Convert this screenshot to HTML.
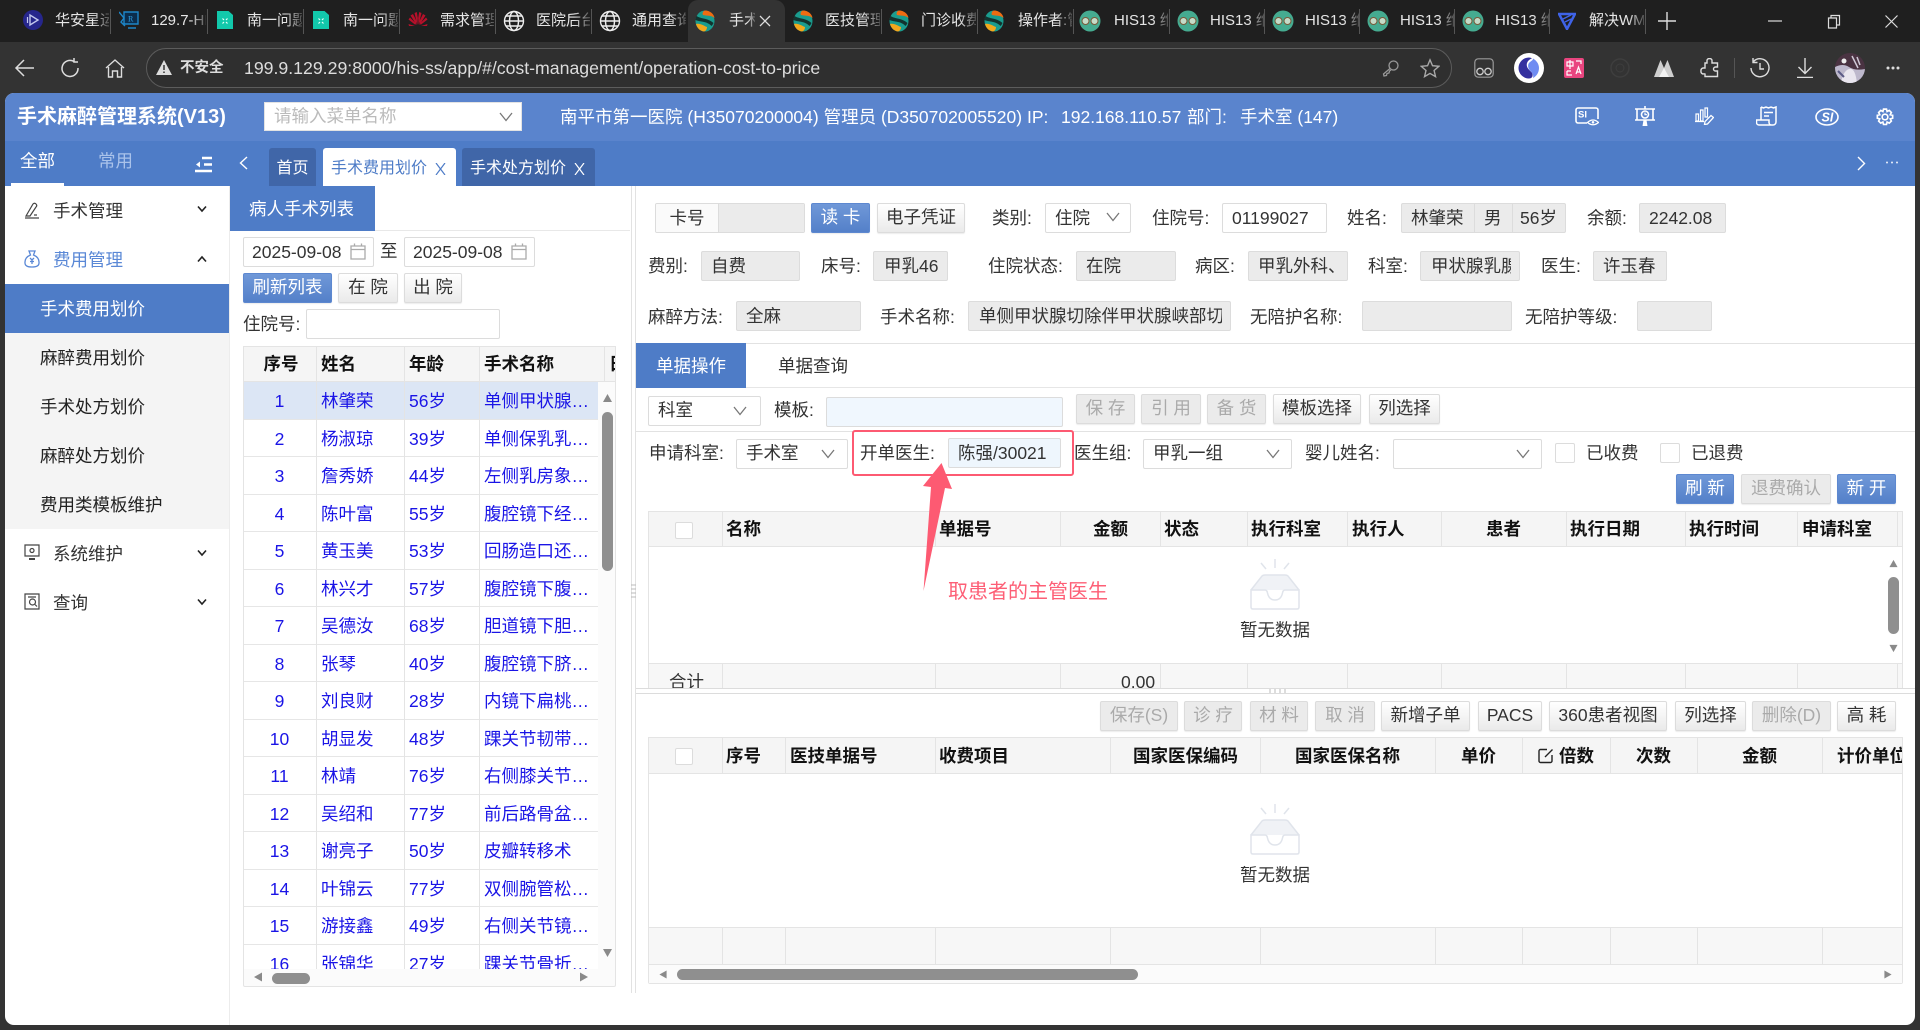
<!DOCTYPE html>
<html lang="zh-CN"><head><meta charset="utf-8"><title>手术麻醉管理系统</title>
<style>
html,body{margin:0;padding:0;width:1920px;height:1030px;overflow:hidden;background:#333}
body{position:relative;font-family:"Liberation Sans","Noto Sans CJK SC",sans-serif;font-size:17.5px;color:#333}
div,span,svg{position:absolute;box-sizing:border-box}
.t{white-space:nowrap;line-height:30px;height:30px}
.f{border:1px solid #dcdcdc;border-radius:2px;background:#fff;height:30px;line-height:28px;white-space:nowrap;overflow:hidden}
.g{background:#ebebeb}
.b{border:1px solid #dcdcdc;border-radius:2px;height:30px;line-height:27px;text-align:center;white-space:nowrap;background:linear-gradient(#fff,#eaeaea);box-shadow:0 1px 1px rgba(0,0,0,.08)}
.d{background:#ebebeb;color:#aaa}
.p{background:linear-gradient(#7098d8,#5480c9);border-color:#5d88d0;color:#fff}
.tab{top:9px;height:24px;line-height:24px;font-size:15px;color:#e6e6e6;white-space:nowrap;overflow:hidden;-webkit-mask-image:linear-gradient(90deg,#000 70%,rgba(0,0,0,.25))}
.sep{top:9px;width:1px;height:25px;background:#555}
.m{left:53px;font-size:17.5px;color:#333}
.s{left:40px;font-size:17.5px;color:#222}
.th{font-weight:700;color:#111;white-space:nowrap;line-height:30px;height:30px}
.vl{width:1px;background:#e4e4e4}
.r{left:0;width:355px;height:37.5px;border-bottom:1.5px solid #e6e6e6;color:#1a14e6;line-height:38px}
.r span{white-space:nowrap}
.r span:nth-child(1){left:0;width:73px;text-align:center}
.r span:nth-child(2){left:78px}
.r span:nth-child(3){left:166px}
.r span:nth-child(4){left:241px}
.hi{stroke:#fff;fill:none;stroke-width:1.6}
</style></head><body>
<svg width="0" height="0" style="left:0;top:0"><defs>
<symbol id="orb" viewBox="0 0 20 22"><ellipse cx="10" cy="11" rx="9.5" ry="10.5" fill="#1a9c8e"/><path d="M10 .5C15 .5 19 4 19.5 8 16 5 12 6 8 5 7 3 8 1 10 .5Z" fill="#ef6c12"/><path d="M1 14c4-1 8 2 11 3 0 2-1 4-3 4.500C5 21 2 18 1 14Z" fill="#f2a81d"/><path d="M1.500 6C6 9 13 8 18.500 13c-.5 1-1 2-2 3C12 11 5 12 .5 10c0-1.500.5-3 1-4Z" fill="#12332f"/></symbol>
<symbol id="glass" viewBox="0 0 22 22"><circle cx="11" cy="11" r="10.500" fill="#45ab90"/><circle cx="6.500" cy="11" r="3.500" fill="#c5dcc9" stroke="#7a5a3a"/><circle cx="15.500" cy="11" r="3.500" fill="#c5dcc9" stroke="#7a5a3a"/></symbol>
<symbol id="globe" viewBox="0 0 22 22"><g fill="none" stroke="#eee" stroke-width="1.400"><circle cx="11" cy="11" r="9.500"/><ellipse cx="11" cy="11" rx="4.500" ry="9.500"/><path d="M1.500 11h19M3 6h16M3 16h16"/></g></symbol>
<symbol id="doc" viewBox="0 0 16 18"><path d="M0 0h11.500l4.500 4v14H0Z" fill="#12c8ab"/><path d="M5.500 7.500l1.500 1.500M10.500 7.500 9 9M5.500 12.500 7 11M10.500 12.500 9 11" stroke="#e8fffa" stroke-width="1.200"/></symbol>
<symbol id="chev" viewBox="0 0 14 10"><path d="M1 1l6 7.500L13 1" fill="none" stroke="#777" stroke-width="1.300"/></symbol>
<symbol id="cal" viewBox="0 0 16 16"><path d="M1 2.500h14v13H1ZM1 6h14M4.500 0v3M11.500 0v3" fill="none" stroke="#aaa" stroke-width="1.300"/></symbol>
<symbol id="sc" viewBox="0 0 10 10"><path d="M5 1l4.500 8H.5Z" fill="#8a8a8a"/></symbol>
<symbol id="empty" viewBox="0 0 50 51"><g fill="none" stroke="#e0e4eb" stroke-width="1.500"><path d="M25 0v9M11 4l5 6M39 4l-5 6"/><path d="M1 31 12 17q1-1 3-1h20q2 0 3 1l11 14" fill="#f0f2f6"/><path d="M1 31h14q2 0 2.500 3 1.500 7 7.500 7t7.500-7q.5-3 2.500-3h14v17q0 2-2 2H3q-2 0-2-2Z" fill="#fff"/></g></symbol>
</defs></svg>

<!-- browser tab strip -->
<div style="left:0;top:0;width:1920px;height:42px;background:#1f1f1f"></div>
<div style="left:688px;top:0;width:97px;height:42px;background:#333;border-radius:10px 10px 0 0"></div>
<div class="sep" style="left:110px"></div><div class="sep" style="left:207px"></div><div class="sep" style="left:303px"></div><div class="sep" style="left:399px"></div><div class="sep" style="left:495px"></div><div class="sep" style="left:591px"></div><div class="sep" style="left:881px"></div><div class="sep" style="left:977px"></div><div class="sep" style="left:1073px"></div><div class="sep" style="left:1169px"></div><div class="sep" style="left:1264px"></div><div class="sep" style="left:1359px"></div><div class="sep" style="left:1454px"></div><div class="sep" style="left:1549px"></div><div class="sep" style="left:1645px"></div>
<svg style="left:23px;top:10px" width="20" height="20" viewBox="0 0 20 20"><circle cx="10" cy="10" r="10" fill="#26268c"/><path d="M7 5v10l8-5Z" fill="none" stroke="#c3c8ee" stroke-width="1.400"/><path d="M4.500 7v6" stroke="#c3c8ee" stroke-width="1.200"/></svg>
<svg style="left:119px;top:11px" width="20" height="18" viewBox="0 0 20 18"><path d="M5 1h14v12H5Z" fill="#0b2d4d" stroke="#1d86c9" stroke-width="1.400"/><path d="M0 1l5 6-3 4 4 4M9 17h8" fill="none" stroke="#1d86c9" stroke-width="1.400"/><text x="9" y="10.500" font-size="8" fill="#2e9fe0" font-family="Liberation Serif">R</text></svg>
<svg style="left:217px;top:11px" width="16" height="18"><use href="#doc"/></svg>
<svg style="left:313px;top:11px" width="16" height="18"><use href="#doc"/></svg>
<svg style="left:408px;top:12px" width="20" height="14" viewBox="0 0 20 14"><g fill="#b8102a"><path d="M9.400 13 6.500 1 8.800 0l1 6ZM10.600 13l2.900-12L11.200 0l-1 6ZM8.500 13 2.500 3.500 5 2 8.500 9ZM11.500 13l6-9.500L15 2l-3.500 7ZM7.500 13 .5 7.500 2 5.500 7.500 11ZM12.500 13l7-5.500L18 5.500 12.500 11Z"/><path d="M7 14H1l-.5-2ZM13 14h6l.5-2Z"/></g></svg>
<svg style="left:503px;top:10px" width="22" height="22"><use href="#globe"/></svg>
<svg style="left:599px;top:10px" width="22" height="22"><use href="#globe"/></svg>
<svg style="left:695px;top:10px" width="20" height="22"><use href="#orb"/></svg>
<svg style="left:793px;top:10px" width="20" height="22"><use href="#orb"/></svg>
<svg style="left:889px;top:10px" width="20" height="22"><use href="#orb"/></svg>
<svg style="left:984px;top:10px" width="20" height="22"><use href="#orb"/></svg>
<svg style="left:1079px;top:10px" width="22" height="22"><use href="#glass"/></svg>
<svg style="left:1177px;top:10px" width="22" height="22"><use href="#glass"/></svg>
<svg style="left:1272px;top:10px" width="22" height="22"><use href="#glass"/></svg>
<svg style="left:1367px;top:10px" width="22" height="22"><use href="#glass"/></svg>
<svg style="left:1462px;top:10px" width="22" height="22"><use href="#glass"/></svg>
<svg style="left:1558px;top:12px" width="18" height="18" viewBox="0 0 18 18"><path d="M1 2h16l-8 15Z" fill="none" stroke="#3f63e8" stroke-width="2.500"/><path d="M5 7l8-4M7 10l6-3" stroke="#3f63e8" stroke-width="1.500"/></svg>
<div class="tab" style="left:55px;width:54px">华安星运维</div>
<div class="tab" style="left:151px;width:55px">129.7-HIS</div>
<div class="tab" style="left:247px;width:55px">南一问题单</div>
<div class="tab" style="left:343px;width:55px">南一问题单</div>
<div class="tab" style="left:440px;width:54px">需求管理</div>
<div class="tab" style="left:536px;width:54px">医院后台</div>
<div class="tab" style="left:632px;width:54px">通用查询</div>
<div class="tab" style="left:729px;width:26px">手术</div>
<svg style="left:759px;top:15px" width="12" height="12"><path d="M1 1l10 10M11 1 1 11" stroke="#ddd" stroke-width="1.300"/></svg>
<div class="tab" style="left:825px;width:55px">医技管理</div>
<div class="tab" style="left:921px;width:55px">门诊收费</div>
<div class="tab" style="left:1018px;width:54px">操作者:管</div>
<div class="tab" style="left:1114px;width:54px">HIS13 维</div>
<div class="tab" style="left:1210px;width:54px">HIS13 维</div>
<div class="tab" style="left:1305px;width:54px">HIS13 维</div>
<div class="tab" style="left:1400px;width:54px">HIS13 维</div>
<div class="tab" style="left:1495px;width:54px">HIS13 维</div>
<div class="tab" style="left:1589px;width:55px">解决WM</div>
<svg style="left:1658px;top:12px" width="18" height="18"><path d="M9 0v18M0 9h18" stroke="#ddd" stroke-width="1.400"/></svg>
<svg style="left:1768px;top:20px" width="14" height="2"><path d="M0 1h14" stroke="#ddd" stroke-width="1.200"/></svg>
<svg style="left:1827px;top:14px" width="14" height="15"><path d="M1.500 4h8v10h-8ZM4 4V1.500h8.500V11H9.500" fill="none" stroke="#ddd" stroke-width="1.200"/></svg>
<svg style="left:1885px;top:15px" width="13" height="13"><path d="M.5.500l12 12M12.500.500l-12 12" stroke="#ddd" stroke-width="1.200"/></svg>

<!-- toolbar -->
<div style="left:0;top:42px;width:1920px;height:51px;background:#333"></div>
<svg style="left:14px;top:59px" width="21" height="18"><path d="M20 9H2M10 1 2 9l8 8" fill="none" stroke="#ddd" stroke-width="1.500"/></svg>
<svg style="left:60px;top:58px" width="20" height="20" viewBox="0 0 20 20"><path d="M14 3.500A8 8 0 1 0 18 10M14 0v4h4" fill="none" stroke="#ddd" stroke-width="1.500"/></svg>
<svg style="left:105px;top:59px" width="20" height="19"><path d="M1 9l9-8 9 8M3.500 8v10h4v-6h5v6h4V8" fill="none" stroke="#ddd" stroke-width="1.400"/></svg>
<div style="left:146px;top:48px;width:1306px;height:40px;border:1px solid #5c5c5c;border-radius:20px;background:#2f2f2f"></div>
<svg style="left:156px;top:60px" width="16" height="15"><path d="M8 0l8 15H0Z" fill="#ddd"/><path d="M8 5v5M8 11.500v1.500" stroke="#333" stroke-width="1.500"/></svg>
<div class="t" style="left:180px;top:53px;font-size:14.5px;font-weight:700;color:#ddd">不安全</div>
<div class="t" style="left:244px;top:53px;font-size:17.700px;color:#ddd">199.9.129.29:8000/his-ss/app/#/cost-management/operation-cost-to-price</div>
<svg style="left:1382px;top:60px" width="17" height="17" viewBox="0 0 17 17"><circle cx="11.500" cy="5.500" r="4.500" fill="none" stroke="#999" stroke-width="1.300"/><path d="M8 8.500 1.500 14l.5 2 2.500-.5.500-2 2-.5.500-2 1.500-1" fill="none" stroke="#999" stroke-width="1.300"/></svg>
<svg style="left:1420px;top:58px" width="20" height="20" viewBox="0 0 22 21"><path d="M11 1.500l2.800 6.500 7 .6-5.300 4.600 1.600 6.800-6.100-3.600L5 20l1.600-6.800L1.300 8.600l7-.6Z" fill="none" stroke="#aaa" stroke-width="1.500"/></svg>
<svg style="left:1474px;top:58px" width="20" height="20" viewBox="0 0 20 20"><rect x=".8" y=".8" width="18.400" height="18.400" rx="3.500" fill="none" stroke="#999" stroke-width="1.200"/><circle cx="6" cy="13.500" r="3.200" fill="none" stroke="#ccc" stroke-width="1.300"/><circle cx="14" cy="13.500" r="3.200" fill="none" stroke="#ccc" stroke-width="1.300"/></svg>
<svg style="left:1514px;top:53px" width="30" height="30" viewBox="0 0 30 30"><circle cx="15" cy="15" r="15" fill="#fff"/><path d="M15 4.500a10.500 10.500 0 0 0 0 21c3 0 4-2 3.500-4.500S14 17 13 13.500 14 7 18 5.200A10 10 0 0 0 15 4.500Z" fill="#34309f"/><path d="M19 5.500c3.500 2 6 5.500 6 9.500 0 5-3 8.500-6 10 1-3-1-5.500-3-7.500S13 11 16 9c2-1.500 3-2 3-3.500Z" fill="#6f8cf2"/></svg>
<svg style="left:1564px;top:58px" width="20" height="20" viewBox="0 0 20 20"><rect width="20" height="20" rx="2" fill="#e9457f"/><path d="M3 4h6v4H3ZM6 2v9M3 13h4M3 13v4h5M12 16l2.500-7 2.500 7M13 14h3M12 3h5v3" fill="none" stroke="#fff" stroke-width="1.200"/></svg>
<svg style="left:1610px;top:58px" width="20" height="20"><circle cx="10" cy="10" r="9" fill="none" stroke="#3e3e3e" stroke-width="1.500"/><circle cx="10" cy="10" r="4" fill="none" stroke="#3e3e3e"/></svg>
<svg style="left:1654px;top:60px" width="20" height="17" viewBox="0 0 20 17"><path d="M0 17 6.500 0 10 8 13.500 0 20 17Z" fill="#cfcfcf"/><path d="M5 17 10 8l5 9Z" fill="#f2f2f2"/></svg>
<svg style="left:1700px;top:58px" width="19" height="20" viewBox="0 0 19 20"><path d="M7 2.500a2.500 2 0 0 1 5 0V5h5.500v4h-2a2 2 0 0 0 0 4h2v5.500H5V16a2.500 2.500 0 0 0-2 0 2.500 2.500 0 0 1-2-3 2.500 2.500 0 0 1 2-3h2V5h2Z" fill="none" stroke="#ddd" stroke-width="1.400"/></svg>
<div style="left:1734px;top:58px;width:1px;height:20px;background:#555"></div>
<svg style="left:1750px;top:58px" width="20" height="20" viewBox="0 0 20 20"><path d="M3.500 3.500A9 9 0 1 1 1 10M3 0v4.500h4.500M10 5v6h4" fill="none" stroke="#ddd" stroke-width="1.400"/></svg>
<svg style="left:1797px;top:58px" width="16" height="20"><path d="M8 0v15M1.500 9 8 15.500 14.500 9M0 19.500h16" fill="none" stroke="#ddd" stroke-width="1.400"/></svg>
<svg style="left:1835px;top:53px" width="30" height="30" viewBox="0 0 30 30"><defs><clipPath id="av"><circle cx="15" cy="15" r="15"/></clipPath></defs><g clip-path="url(#av)"><rect width="30" height="30" fill="#4a3342"/><path d="M0 30V14q8-4 14 0t16 2v14Z" fill="#bdb8cc"/><path d="M6 30q2-12 8-14t8 14Z" fill="#e9e6ef"/><circle cx="9" cy="8" r="2.500" fill="#eee"/><path d="M17 3l6 12M22 4l3 8" stroke="#cfc8d6" stroke-width="1.500"/><path d="M3 18l6 6" stroke="#5b5a86" stroke-width="2"/></g></svg>
<svg style="left:1886px;top:66px" width="14" height="4"><circle cx="2" cy="2" r="1.500" fill="#ddd"/><circle cx="7" cy="2" r="1.500" fill="#ddd"/><circle cx="12" cy="2" r="1.500" fill="#ddd"/></svg>

<!-- app -->
<div style="left:5px;top:93px;width:1910px;height:932px;background:#fff;border-radius:9px;overflow:hidden">
  <div style="left:0;top:0;width:1910px;height:48px;background:#5a84cd"></div>
  <div style="left:0;top:48px;width:1910px;height:45px;background:#4e7cc7"></div>
</div>
<div class="t" style="left:17px;top:102px;font-size:20px;font-weight:700;color:#fff">手术麻醉管理系统(V13)</div>
<div style="left:264px;top:102px;width:258px;height:29px;background:#fff;border:1px solid #e3e3e3"></div>
<div class="t" style="left:274px;top:101px;color:#bbb">请输入菜单名称</div>
<svg style="left:499px;top:112px" width="14" height="10"><use href="#chev"/></svg>
<div class="t" style="left:560px;top:102px;color:#fff">南平市第一医院 (H35070200004) 管理员 (D350702005520)</div>
<div class="t" style="left:1027px;top:102px;color:#fff">IP:</div>
<div class="t" style="left:1061px;top:102px;color:#fff">192.168.110.57</div>
<div class="t" style="left:1187px;top:102px;color:#fff">部门:</div>
<div class="t" style="left:1240px;top:102px;color:#fff">手术室 (147)</div>
<!-- header icons -->
<svg class="hi" style="left:1575px;top:107px" width="24" height="20" viewBox="0 0 24 20"><path d="M12 16H3a2 2 0 0 1-2-2V3a2 2 0 0 1 2-2h18a2 2 0 0 1 2 2v9"/><path d="M12.500 15.500q5.500-5 11 0-5.500 4.500-11 0Z" stroke-width="1.300"/><circle cx="18" cy="15.300" r="1.300" fill="#fff" stroke="none"/><text x="3" y="10.500" font-size="9.500" font-weight="700" fill="#fff" stroke="none" font-family="Liberation Sans">SI</text></svg>
<svg class="hi" style="left:1635px;top:106px" width="20" height="20" viewBox="0 0 20 20"><path d="M0 3h20M10 0v3M2 3v11h16V3M0 14h20"/><circle cx="10" cy="8.500" r="3.500"/><path d="M10 6.500v2.200h2" stroke-width="1.200"/><path d="M7.500 20l1-6h3l1 6" fill="#fff" stroke="none"/></svg>
<svg class="hi" style="left:1695px;top:107px" width="19" height="18" viewBox="0 0 19 18"><path d="M1 7h2.500v7H1ZM5.500 3H8v11H5.500ZM10 1h2.500v9H10ZM0 14.500h9" stroke-width="1.200"/><path d="M16 8.500l2.500 2-6 6.500-3 .5.500-3Z" stroke-width="1.300"/></svg>
<svg class="hi" style="left:1756px;top:106px" width="21" height="20" viewBox="0 0 21 20"><path d="M5 1l2.500 1L10 1l2.500 1L15 1l2.500 1L20 1v15a3 3 0 0 1-3 3H3a2.500 2.500 0 0 1-2.500-2.500V14H13v2.500a2.500 2.500 0 0 0 2.500 2.500M5 1v13" stroke-width="1.500"/><path d="M8 6.500h9M8 10h5" stroke-width="1.500"/></svg>
<svg class="hi" style="left:1815px;top:108px" width="24" height="18" viewBox="0 0 24 18"><ellipse cx="12" cy="9" rx="11" ry="8"/><text x="6.500" y="13.500" font-size="12.500" font-weight="700" font-style="italic" fill="#fff" stroke="none" font-family="Liberation Sans">SI</text></svg>
<svg class="hi" style="left:1876px;top:108px" width="18" height="18" viewBox="0 0 24 24" style="stroke-width:2.200"><path d="M10 1.500h4l.8 3.200 2.900-1.500 2.800 2.800-1.500 2.900 3.200.8v4l-3.200.8 1.500 2.900-2.800 2.800-2.900-1.500-.8 3.200h-4l-.8-3.200-2.900 1.500-2.800-2.800 1.500-2.900-3.200-.8v-4l3.200-.8-1.500-2.900 2.800-2.800 2.900 1.500Z" stroke-width="2.200"/><circle cx="12" cy="12" r="3.800" stroke-width="2.200"/></svg>

<!-- tab row -->
<div class="t" style="left:20px;top:146px;color:#fff">全部</div>
<div class="t" style="left:98px;top:146px;color:#a9c2ea">常用</div>
<div style="left:11px;top:183px;width:53px;height:3px;background:#fff"></div>
<svg style="left:195px;top:156px" width="17" height="17"><path d="M7 2h10M9 8.500h8M0 15h17" stroke="#fff" stroke-width="2.400"/><path d="M5 5.500 1 8.500l4 3Z" fill="#fff"/></svg>
<svg style="left:239px;top:156px" width="9" height="14"><path d="M8 1 1.500 7 8 13" fill="none" stroke="#fff" stroke-width="1.400"/></svg>
<div style="left:269px;top:148px;width:47px;height:38px;background:#4066a8;border-radius:3px 3px 0 0;color:#fff;text-align:center;line-height:42px;font-size:16px">首页</div>
<div style="left:323px;top:148px;width:133px;height:38px;background:#fff;border-radius:3px 3px 0 0;color:#4e7cc7;line-height:42px;padding-left:8px;white-space:nowrap;font-size:16px">手术费用划价<svg style="left:112px;top:15px" width="11" height="12"><path d="M1 0l9 12M10 0 1 12" stroke="#4e7cc7" stroke-width="1.200"/></svg></div>
<div style="left:462px;top:148px;width:133px;height:38px;background:#4066a8;border-radius:3px 3px 0 0;color:#fff;line-height:42px;padding-left:8px;white-space:nowrap;font-size:16px">手术处方划价<svg style="left:112px;top:15px" width="11" height="12"><path d="M1 0l9 12M10 0 1 12" stroke="#fff" stroke-width="1.200"/></svg></div>
<svg style="left:1857px;top:156px" width="9" height="15"><path d="M1 1l6.500 6.500L1 14" fill="none" stroke="#fff" stroke-width="1.400"/></svg>
<svg style="left:1885px;top:161px" width="14" height="3"><circle cx="2" cy="1.500" r="1" fill="#e8eefa"/><circle cx="7" cy="1.500" r="1" fill="#e8eefa"/><circle cx="12" cy="1.500" r="1" fill="#e8eefa"/></svg>

<!-- sidebar -->
<div style="left:229px;top:186px;width:1px;height:839px;background:#ececec"></div>
<div style="left:5px;top:333px;width:224px;height:196px;background:#f4f4f4"></div>
<div style="left:5px;top:284px;width:224px;height:49px;background:#4e7cc7"></div>
<svg style="left:24px;top:202px" width="16" height="17" viewBox="0 0 16 17" fill="none" stroke="#444" stroke-width="1.200"><path d="M2 14 9 2q1.500-1.500 3 0t0 3L6 14H2ZM1 16h14M10 13h3"/></svg>
<svg style="left:24px;top:250px" width="16" height="18" viewBox="0 0 16 18" fill="none" stroke="#5a88d6" stroke-width="1.300"><path d="M5 1h6L9.500 5q6 2.500 5.500 8 0 4-7 4t-7-4q-.5-5.500 5.500-8Z"/><path d="M6 8l2 2 2-2M8 10v4M6 11.500h4"/></svg>
<svg style="left:24px;top:544px" width="16" height="18" viewBox="0 0 16 18" fill="none" stroke="#444" stroke-width="1.200"><path d="M1 1h14v11H1Z"/><circle cx="8" cy="6.500" r="2"/><path d="M5 15h6" stroke-width="2"/></svg>
<svg style="left:24px;top:593px" width="16" height="17" viewBox="0 0 16 17" fill="none" stroke="#444" stroke-width="1.200"><path d="M1 16V1h14v15Z"/><circle cx="8.500" cy="9" r="3"/><path d="M11 11.500l2 2M4 4h8"/></svg>
<div class="t m" style="top:196px">手术管理</div>
<div class="t m" style="top:245px;color:#5a88d6">费用管理</div>
<div class="t m" style="top:539px">系统维护</div>
<div class="t m" style="top:588px">查询</div>
<div class="t s" style="top:294px;color:#fff">手术费用划价</div>
<div class="t s" style="top:343px">麻醉费用划价</div>
<div class="t s" style="top:392px">手术处方划价</div>
<div class="t s" style="top:441px">麻醉处方划价</div>
<div class="t s" style="top:490px">费用类模板维护</div>
<svg style="left:197px;top:205px" width="10" height="8"><path d="M1 1.500 5 6l4-4.500" fill="none" stroke="#222" stroke-width="1.600"/></svg>
<svg style="left:197px;top:255px" width="10" height="8"><path d="M1 6.500 5 2l4 4.500" fill="none" stroke="#222" stroke-width="1.600"/></svg>
<svg style="left:197px;top:549px" width="10" height="8"><path d="M1 1.500 5 6l4-4.500" fill="none" stroke="#222" stroke-width="1.600"/></svg>
<svg style="left:197px;top:598px" width="10" height="8"><path d="M1 1.500 5 6l4-4.500" fill="none" stroke="#222" stroke-width="1.600"/></svg>

<!-- left panel -->
<div style="left:230px;top:230px;width:400px;height:1px;background:#e8e8e8"></div>
<div style="left:230px;top:186px;width:145px;height:45px;background:#4e7cc7;color:#fff;line-height:46px;padding-left:19px">病人手术列表</div>
<div class="f" style="left:243px;top:237px;width:131px;padding-left:8px">2025-09-08</div>
<svg style="left:350px;top:243px" width="16" height="17"><use href="#cal"/></svg>
<div class="t" style="left:380px;top:236px">至</div>
<div class="f" style="left:404px;top:237px;width:131px;padding-left:8px">2025-09-08</div>
<svg style="left:511px;top:243px" width="16" height="17"><use href="#cal"/></svg>
<div class="b p" style="left:243px;top:273px;width:89px">刷新列表</div>
<div class="b" style="left:338px;top:273px;width:60px">在 院</div>
<div class="b" style="left:404px;top:273px;width:58px">出 院</div>
<div class="t" style="left:243px;top:309px">住院号:</div>
<div class="f" style="left:306px;top:309px;width:194px"></div>
<!-- left table -->
<div style="left:243px;top:346px;width:373px;height:641px;border:1px solid #e4e4e4;border-radius:2px;background:#fbfbfb"></div>
<div style="left:243px;top:346px;width:373px;height:36px;background:#f5f5f5;border:1px solid #e4e4e4;overflow:hidden">
<span class="th" style="top:2px;width:50px;text-align:center;left:12px">序号</span>
<span class="th" style="left:77px;top:2px">姓名</span><span class="th" style="left:165px;top:2px">年龄</span><span class="th" style="left:240px;top:2px">手术名称</span><span class="th" style="left:365px;top:2px">日期</span>
</div>
<div style="left:243px;top:382px;width:355px;height:587px;overflow:hidden;background:#fff">
<div class="r" style="top:0;background:#dce6f5"><span>1</span><span>林肇荣</span><span>56岁</span><span>单侧甲状腺…</span></div>
<div class="r" style="top:37.5px"><span>2</span><span>杨淑琼</span><span>39岁</span><span>单侧保乳乳…</span></div>
<div class="r" style="top:75px"><span>3</span><span>詹秀娇</span><span>44岁</span><span>左侧乳房象…</span></div>
<div class="r" style="top:112.5px"><span>4</span><span>陈叶富</span><span>55岁</span><span>腹腔镜下经…</span></div>
<div class="r" style="top:150px"><span>5</span><span>黄玉美</span><span>53岁</span><span>回肠造口还…</span></div>
<div class="r" style="top:187.500px"><span>6</span><span>林兴才</span><span>57岁</span><span>腹腔镜下腹…</span></div>
<div class="r" style="top:225px"><span>7</span><span>吴德汝</span><span>68岁</span><span>胆道镜下胆…</span></div>
<div class="r" style="top:262.500px"><span>8</span><span>张琴</span><span>40岁</span><span>腹腔镜下脐…</span></div>
<div class="r" style="top:300px"><span>9</span><span>刘良财</span><span>28岁</span><span>内镜下扁桃…</span></div>
<div class="r" style="top:337.500px"><span>10</span><span>胡显发</span><span>48岁</span><span>踝关节韧带…</span></div>
<div class="r" style="top:375px"><span>11</span><span>林靖</span><span>76岁</span><span>右侧膝关节…</span></div>
<div class="r" style="top:412.500px"><span>12</span><span>吴绍和</span><span>77岁</span><span>前后路骨盆…</span></div>
<div class="r" style="top:450px"><span>13</span><span>谢亮子</span><span>50岁</span><span>皮瓣转移术</span></div>
<div class="r" style="top:487.500px"><span>14</span><span>叶锦云</span><span>77岁</span><span>双侧腕管松…</span></div>
<div class="r" style="top:525px"><span>15</span><span>游接鑫</span><span>49岁</span><span>右侧关节镜…</span></div>
<div class="r" style="top:562.500px"><span>16</span><span>张锦华</span><span>27岁</span><span>踝关节骨折…</span></div>
<div class="vl" style="left:0;top:0;height:587px"></div><div class="vl" style="left:73px;top:0;height:587px"></div><div class="vl" style="left:161px;top:0;height:587px"></div><div class="vl" style="left:236px;top:0;height:587px"></div>
</div>
<div class="vl" style="left:316px;top:346px;height:36px"></div><div class="vl" style="left:404px;top:346px;height:36px"></div><div class="vl" style="left:479px;top:346px;height:36px"></div><div class="vl" style="left:604px;top:346px;height:36px"></div>
<svg style="left:601px;top:393px" width="13" height="10"><use href="#sc"/></svg>
<div style="left:602px;top:412px;width:11px;height:159px;background:#8f8f8f;border-radius:6px"></div>
<svg style="left:601px;top:948px;transform:rotate(180deg)" width="13" height="10"><use href="#sc"/></svg>
<svg style="left:252px;top:972px;transform:rotate(-90deg)" width="12" height="10"><use href="#sc"/></svg>
<div style="left:272px;top:973px;width:38px;height:11px;background:#8f8f8f;border-radius:6px"></div>
<svg style="left:578px;top:972px;transform:rotate(90deg)" width="12" height="10"><use href="#sc"/></svg>

<!-- splitter -->
<div style="left:631px;top:186px;width:1px;height:807px;background:#e2e2e2"></div>
<div style="left:635px;top:186px;width:1px;height:807px;background:#e2e2e2"></div>
<svg style="left:631px;top:583px" width="5" height="17"><path d="M0 2h5M0 6h5M0 10h5M0 14h5" stroke="#bbb"/></svg>

<!-- right row 1 -->
<div class="f" style="left:655px;top:203px;width:150px;padding-left:0"><span style="left:0;top:0;width:63px;height:28px;background:#fafafa;border-right:1px solid #dcdcdc;text-align:center">卡号</span><span class="g" style="left:63px;top:0;width:86px;height:28px"></span></div>
<div class="b p" style="left:811px;top:203px;width:59px">读 卡</div>
<div class="b" style="left:877px;top:203px;width:88px">电子凭证</div>
<div class="t" style="left:992px;top:203px">类别:</div>
<div class="f" style="left:1045px;top:203px;width:86px;padding-left:9px">住院</div>
<svg style="left:1106px;top:212px" width="14" height="10"><use href="#chev"/></svg>
<div class="t" style="left:1152px;top:203px">住院号:</div>
<div class="f" style="left:1222px;top:203px;width:105px;padding-left:9px">01199027</div>
<div class="t" style="left:1347px;top:203px">姓名:</div>
<div class="f g" style="left:1401px;top:203px;width:165px"><span style="left:9px;top:0">林肇荣</span><span style="left:72px;top:0;width:1px;height:28px;background:#dcdcdc"></span><span style="left:82px;top:0">男</span><span style="left:110px;top:0;width:1px;height:28px;background:#dcdcdc"></span><span style="left:118px;top:0">56岁</span></div>
<div class="t" style="left:1587px;top:203px">余额:</div>
<div class="f g" style="left:1639px;top:203px;width:87px;padding-left:9px">2242.08</div>
<!-- row 2 -->
<div class="t" style="left:648px;top:251px">费别:</div><div class="f g" style="left:701px;top:251px;width:99px;padding-left:9px">自费</div>
<div class="t" style="left:821px;top:251px">床号:</div><div class="f g" style="left:873px;top:251px;width:75px;padding-left:10px">甲乳46</div>
<div class="t" style="left:988px;top:251px">住院状态:</div><div class="f g" style="left:1076px;top:251px;width:100px;padding-left:9px">在院</div>
<div class="t" style="left:1195px;top:251px">病区:</div><div class="f g" style="left:1248px;top:251px;width:100px;padding-left:9px">甲乳外科、</div>
<div class="t" style="left:1368px;top:251px">科室:</div><div class="f g" style="left:1420px;top:251px;width:100px;padding:0 8px 0 10px"><span style="left:10px;top:0;width:80px;height:28px;overflow:hidden">甲状腺乳腺</span></div>
<div class="t" style="left:1541px;top:251px">医生:</div><div class="f g" style="left:1593px;top:251px;width:74px;padding-left:9px">许玉春</div>
<!-- row 3 -->
<div class="t" style="left:648px;top:302px">麻醉方法:</div><div class="f g" style="left:736px;top:301px;width:125px;padding-left:9px;line-height:29px">全麻</div>
<div class="t" style="left:880px;top:302px">手术名称:</div><div class="f g" style="left:968px;top:301px;width:263px"><span style="left:10px;top:0;width:243px;height:28px;overflow:hidden;line-height:29px">单侧甲状腺切除伴甲状腺峡部切除</span></div>
<div class="t" style="left:1250px;top:302px">无陪护名称:</div><div class="f g" style="left:1362px;top:301px;width:150px"></div>
<div class="t" style="left:1525px;top:302px">无陪护等级:</div><div class="f g" style="left:1637px;top:301px;width:75px"></div>
<div style="left:636px;top:343px;width:1279px;height:1px;background:#e2e2e2"></div>
<div style="left:636px;top:387px;width:1279px;height:1px;background:#e6e6e6"></div>
<div style="left:636px;top:343px;width:110px;height:45px;background:#4e7cc7;color:#fff;text-align:center;line-height:46px">单据操作</div>
<div class="t" style="left:778px;top:351px">单据查询</div>
<!-- row 4 -->
<div class="f" style="left:648px;top:396px;width:113px;padding-left:9px;line-height:26px">科室</div>
<svg style="left:733px;top:406px" width="14" height="10"><use href="#chev"/></svg>
<div class="t" style="left:774px;top:395px">模板:</div>
<div class="f" style="left:826px;top:397px;width:237px;background:#f0f7fe"></div>
<div class="b d" style="left:1076px;top:394px;width:59px">保 存</div>
<div class="b d" style="left:1141px;top:394px;width:60px">引 用</div>
<div class="b d" style="left:1207px;top:394px;width:59px">备 货</div>
<div class="b" style="left:1273px;top:394px;width:88px">模板选择</div>
<div class="b" style="left:1369px;top:394px;width:71px">列选择</div>
<div style="left:636px;top:431px;width:1279px;height:1px;background:#e2e2e2"></div>
<!-- row 5 -->
<div class="t" style="left:649px;top:438px">申请科室:</div>
<div class="f" style="left:736px;top:439px;width:112px;padding-left:9px;line-height:26px">手术室</div>
<svg style="left:821px;top:449px" width="14" height="10"><use href="#chev"/></svg>
<div class="t" style="left:860px;top:438px">开单医生:</div>
<div class="f" style="left:948px;top:438px;width:113px;padding-left:9px;background:#eef6fd">陈强/30021</div>
<div style="left:852px;top:430px;width:222px;height:46px;border:2px solid #fd5a72;border-radius:3px"></div>
<div class="t" style="left:1074px;top:438px">医生组:</div>
<div class="f" style="left:1143px;top:439px;width:149px;padding-left:9px;line-height:26px">甲乳一组</div>
<svg style="left:1266px;top:449px" width="14" height="10"><use href="#chev"/></svg>
<div class="t" style="left:1305px;top:438px">婴儿姓名:</div>
<div class="f" style="left:1393px;top:439px;width:149px"></div>
<svg style="left:1516px;top:449px" width="14" height="10"><use href="#chev"/></svg>
<div class="f" style="left:1555px;top:443px;width:20px;height:20px"></div>
<div class="t" style="left:1586px;top:438px">已收费</div>
<div class="f" style="left:1660px;top:443px;width:20px;height:20px"></div>
<div class="t" style="left:1691px;top:438px">已退费</div>
<div class="b p" style="left:1676px;top:474px;width:58px">刷 新</div>
<div class="b d" style="left:1741px;top:474px;width:90px">退费确认</div>
<div class="b p" style="left:1837px;top:474px;width:59px">新 开</div>

<!-- table 1 -->
<div style="left:648px;top:511px;width:1255px;height:177px;border:1px solid #e4e4e4;border-bottom:0;overflow:hidden;background:#fff"></div>
<div style="left:648px;top:511px;width:1255px;height:36px;background:#f5f5f5;border:1px solid #e4e4e4"></div>
<div style="left:649px;top:663px;width:1253px;height:25px;background:#f7f7f7;border-top:1px solid #e4e4e4"></div>
<div class="vl" style="left:722px;top:663px;height:25px"></div>
<div class="vl" style="left:935px;top:511px;height:36px"></div>
<div class="vl" style="left:935px;top:663px;height:25px"></div>
<div class="vl" style="left:722px;top:511px;height:36px"></div>
<div class="vl" style="left:1060px;top:511px;height:36px"></div><div class="vl" style="left:1060px;top:663px;height:25px"></div>
<div class="vl" style="left:1160px;top:511px;height:36px"></div><div class="vl" style="left:1160px;top:663px;height:25px"></div>
<div class="vl" style="left:1247px;top:511px;height:36px"></div><div class="vl" style="left:1247px;top:663px;height:25px"></div>
<div class="vl" style="left:1347px;top:511px;height:36px"></div><div class="vl" style="left:1347px;top:663px;height:25px"></div>
<div class="vl" style="left:1441px;top:511px;height:36px"></div><div class="vl" style="left:1441px;top:663px;height:25px"></div>
<div class="vl" style="left:1566px;top:511px;height:36px"></div><div class="vl" style="left:1566px;top:663px;height:25px"></div>
<div class="vl" style="left:1685px;top:511px;height:36px"></div><div class="vl" style="left:1685px;top:663px;height:25px"></div>
<div class="vl" style="left:1797px;top:511px;height:36px"></div><div class="vl" style="left:1797px;top:663px;height:25px"></div>
<div class="vl" style="left:1897px;top:511px;height:36px"></div><div class="vl" style="left:1897px;top:663px;height:25px"></div>
<div class="f" style="left:675px;top:522px;width:18px;height:17px"></div>
<div class="th" style="left:726px;top:514px">名称</div>
<div class="th" style="left:939px;top:514px">单据号</div>
<div class="th" style="left:1093px;top:514px">金额</div>
<div class="th" style="left:1164px;top:514px">状态</div>
<div class="th" style="left:1251px;top:514px">执行科室</div>
<div class="th" style="left:1352px;top:514px">执行人</div>
<div class="th" style="left:1486px;top:514px">患者</div>
<div class="th" style="left:1570px;top:514px">执行日期</div>
<div class="th" style="left:1689px;top:514px">执行时间</div>
<div class="th" style="left:1802px;top:514px">申请科室</div>
<svg style="left:1250px;top:559px" width="50" height="51"><use href="#empty"/></svg>
<div class="t" style="left:1240px;top:615px;width:70px;text-align:center;color:#333">暂无数据</div>
<svg style="left:1887px;top:559px" width="13" height="9"><use href="#sc"/></svg>
<div style="left:1888px;top:577px;width:11px;height:57px;background:#8f8f8f;border-radius:6px"></div>
<svg style="left:1887px;top:644px;transform:rotate(180deg)" width="13" height="9"><use href="#sc"/></svg>
<div style="left:649px;top:664px;width:60px;height:24px;overflow:hidden"><span class="t" style="left:20px;top:3px;color:#333">合计</span></div>
<div style="left:1115px;top:664px;width:45px;height:24px;overflow:hidden"><span class="t" style="left:6px;top:3px;color:#333">0.00</span></div>

<!-- arrow and annotation -->
<svg style="left:915px;top:455px" width="45" height="145" viewBox="915 455 45 145"><path d="M941.500 463 952 489 945 488 923.500 591 931 487 923 486Z" fill="#fd5a72"/></svg>
<div class="t" style="left:948px;top:577px;font-size:20px;color:#fd5f76">取患者的主管医生</div>

<!-- split -->
<div style="left:636px;top:688px;width:1279px;height:1px;background:#dcdcdc"></div>
<div style="left:636px;top:693px;width:1279px;height:1px;background:#dcdcdc"></div>
<svg style="left:1269px;top:689px" width="17" height="4"><path d="M1 0v4M6 0v4M11 0v4M16 0v4" stroke="#bbb"/></svg>

<!-- buttons 2 -->
<div class="b d" style="left:1100px;top:701px;width:78px">保存(S)</div>
<div class="b d" style="left:1184px;top:701px;width:58px">诊 疗</div>
<div class="b d" style="left:1250px;top:701px;width:58px">材 料</div>
<div class="b d" style="left:1315px;top:701px;width:60px">取 消</div>
<div class="b" style="left:1381px;top:701px;width:89px">新增子单</div>
<div class="b" style="left:1478px;top:701px;width:64px">PACS</div>
<div class="b" style="left:1549px;top:701px;width:118px">360患者视图</div>
<div class="b" style="left:1675px;top:701px;width:71px">列选择</div>
<div class="b d" style="left:1752px;top:701px;width:79px">删除(D)</div>
<div class="b" style="left:1837px;top:701px;width:59px">高 耗</div>

<!-- table 2 -->
<div style="left:648px;top:737px;width:1255px;height:247px;border:1px solid #e4e4e4;border-radius:2px;background:#fff"></div>
<div style="left:648px;top:737px;width:1255px;height:37px;background:#f5f5f5;border:1px solid #e4e4e4"></div>
<div style="left:649px;top:927px;width:1253px;height:38px;background:#f7f7f7;border-top:1px solid #e4e4e4;border-bottom:1px solid #e4e4e4"></div>
<div style="left:649px;top:965px;width:1253px;height:18px;background:#fbfbfb"></div>
<div class="vl" style="left:722px;top:737px;height:37px"></div><div class="vl" style="left:722px;top:927px;height:38px"></div>
<div class="vl" style="left:785px;top:737px;height:37px"></div><div class="vl" style="left:785px;top:927px;height:38px"></div>
<div class="vl" style="left:935px;top:737px;height:37px"></div><div class="vl" style="left:935px;top:927px;height:38px"></div>
<div class="vl" style="left:1110px;top:737px;height:37px"></div><div class="vl" style="left:1110px;top:927px;height:38px"></div>
<div class="vl" style="left:1260px;top:737px;height:37px"></div><div class="vl" style="left:1260px;top:927px;height:38px"></div>
<div class="vl" style="left:1435px;top:737px;height:37px"></div><div class="vl" style="left:1435px;top:927px;height:38px"></div>
<div class="vl" style="left:1522px;top:737px;height:37px"></div><div class="vl" style="left:1522px;top:927px;height:38px"></div>
<div class="vl" style="left:1610px;top:737px;height:37px"></div><div class="vl" style="left:1610px;top:927px;height:38px"></div>
<div class="vl" style="left:1697px;top:737px;height:37px"></div><div class="vl" style="left:1697px;top:927px;height:38px"></div>
<div class="vl" style="left:1822px;top:737px;height:37px"></div><div class="vl" style="left:1822px;top:927px;height:38px"></div>
<div class="f" style="left:675px;top:748px;width:18px;height:17px"></div>
<div class="th" style="left:726px;top:741px">序号</div>
<div class="th" style="left:790px;top:741px">医技单据号</div>
<div class="th" style="left:939px;top:741px">收费项目</div>
<div class="th" style="left:1133px;top:741px">国家医保编码</div>
<div class="th" style="left:1295px;top:741px">国家医保名称</div>
<div class="th" style="left:1461px;top:741px">单价</div>
<svg style="left:1538px;top:748px" width="16" height="16" viewBox="0 0 16 16"><path d="M9 1.500H2.500a1.500 1.500 0 0 0-1.500 1.500v10a1.500 1.500 0 0 0 1.500 1.500h10a1.500 1.500 0 0 0 1.500-1.500V7M7 9l7.500-7.500" fill="none" stroke="#222" stroke-width="1.400"/></svg>
<div class="th" style="left:1559px;top:741px">倍数</div>
<div class="th" style="left:1636px;top:741px">次数</div>
<div class="th" style="left:1742px;top:741px">金额</div>
<div style="left:1830px;top:741px;width:72px;height:30px;overflow:hidden"><span class="th" style="left:7px;top:0">计价单位</span></div>
<svg style="left:1250px;top:804px" width="50" height="51"><use href="#empty"/></svg>
<div class="t" style="left:1240px;top:860px;width:70px;text-align:center;color:#333">暂无数据</div>
<svg style="left:657px;top:970px;transform:rotate(-90deg)" width="12" height="9"><use href="#sc"/></svg>
<div style="left:677px;top:969px;width:461px;height:11px;background:#8f8f8f;border-radius:6px"></div>
<svg style="left:1882px;top:970px;transform:rotate(90deg)" width="12" height="9"><use href="#sc"/></svg>
</body></html>
